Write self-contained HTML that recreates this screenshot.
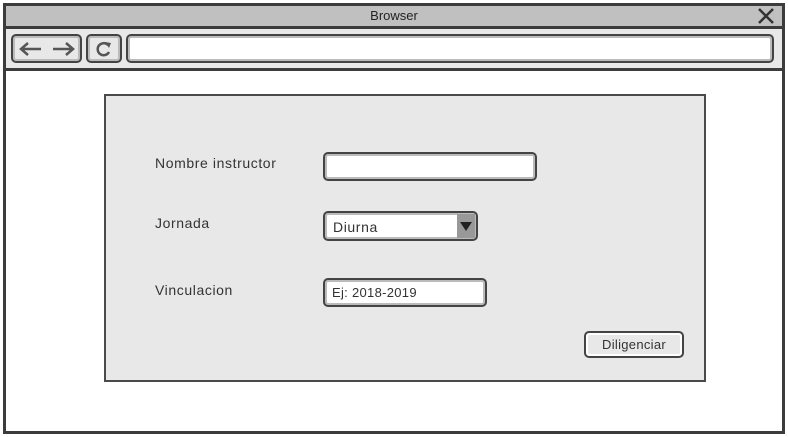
<!DOCTYPE html>
<html><head><meta charset="utf-8"><style>
*{margin:0;padding:0;box-sizing:border-box}
body{width:788px;height:437px;background:#fff;position:relative;overflow:hidden;font-family:"Liberation Sans",sans-serif;color:#333}
.a{position:absolute}
.box{position:absolute;border:2px solid #444;border-radius:5px;box-shadow:inset 0 0 0 2px #bbb}
.lbl{position:absolute;font-size:14px;letter-spacing:0.6px;color:#333}
</style></head><body>
<div class="a" style="left:3px;top:3px;width:782px;height:431px;border:3px solid #3c3c3c"></div>
<div class="a" style="left:6px;top:6px;width:776px;height:20px;background:#c0c0c0"></div>
<div class="a" style="left:0;top:6px;width:788px;height:20px;text-align:center;font-size:13px;line-height:20px;color:#222">Browser</div>
<svg class="a" style="left:756px;top:7px" width="20" height="18"><path d="M3 2 L17 16 M17 2 L3 16" stroke="#333" stroke-width="2.5"/></svg>
<div class="a" style="left:6px;top:26px;width:776px;height:3px;background:#3c3c3c"></div>
<div class="a" style="left:6px;top:29px;width:776px;height:39px;background:#e8e8e8"></div>
<div class="a" style="left:6px;top:68px;width:776px;height:3px;background:#3c3c3c"></div>
<div class="box" style="left:11px;top:34px;width:71px;height:29px;background:#e8e8e8"></div>
<svg class="a" style="left:11px;top:34px" width="71" height="29"><path d="M10 15 H30 M17 9 L10 15 L17 21 M42 15 H62 M55 9 L62 15 L55 21" stroke="#555" stroke-width="2.5" fill="none"/></svg>
<div class="box" style="left:86px;top:34px;width:36px;height:29px;background:#e8e8e8"></div>
<svg class="a" style="left:86px;top:34px" width="36" height="29"><path d="M22 11 A6 6 0 1 0 23 18" stroke="#555" stroke-width="2.5" fill="none"/><path d="M19 8 L25 9 L23 14 Z" fill="#555"/></svg>
<div class="box" style="left:126px;top:34px;width:648px;height:29px;background:#fff"></div>
<div class="a" style="left:104px;top:94px;width:602px;height:288px;background:#e8e8e8;border:2px solid #4a4a4a"></div>
<div class="lbl" style="left:155px;top:155px">Nombre instructor</div>
<div class="lbl" style="left:155px;top:215px">Jornada</div>
<div class="lbl" style="left:155px;top:282px">Vinculacion</div>
<div class="box" style="left:323px;top:152px;width:214px;height:29px;background:#fff"></div>
<div class="box" style="left:323px;top:211px;width:155px;height:30px;background:#fff"></div>
<div class="a" style="left:457px;top:214px;width:18px;height:24px;background:#999"></div>
<svg class="a" style="left:457px;top:214px" width="18" height="24"><path d="M3 8 H15 L9 17 Z" fill="#222"/></svg>
<div class="lbl" style="left:333px;top:219px">Diurna</div>
<div class="box" style="left:323px;top:278px;width:164px;height:29px;background:#fff"></div>
<div class="lbl" style="left:332px;top:285px;font-size:13px;letter-spacing:0.3px">Ej: 2018-2019</div>
<div class="box" style="left:584px;top:331px;width:100px;height:27px;background:#e8e8e8;box-shadow:inset 0 0 0 2px #fff"></div>
<div class="lbl" style="left:584px;top:337px;width:100px;text-align:center;font-size:13px;letter-spacing:0.3px">Diligenciar</div>
</body></html>
